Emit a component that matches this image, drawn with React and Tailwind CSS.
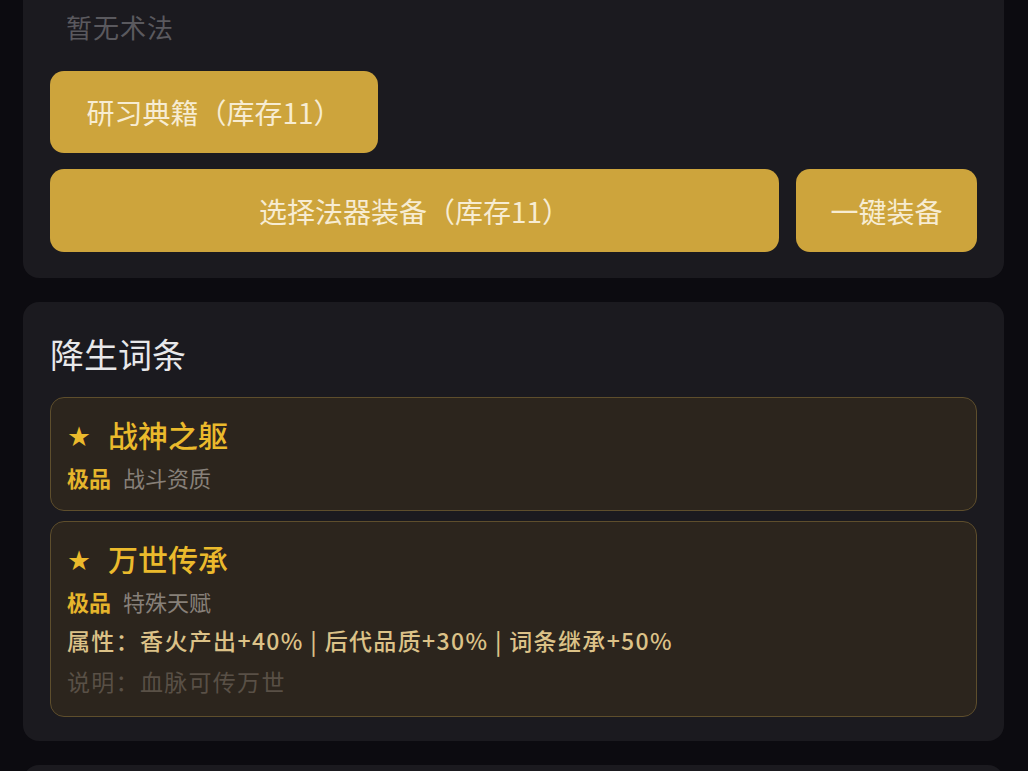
import React from "react";

const font = { fontFamily: '"Noto Sans CJK SC", "Noto Sans", sans-serif' };

function Trait({ title, grade, kind, attr, desc }) {
  return (
    <div className="rounded-[14px] border border-[#5e4e2c] bg-[#2c251d] pl-[16px] pr-4 pt-[18px] pb-[19px]">
      <div className="flex items-center h-[36px] text-[#ebba2c]">
        <span className="text-[22px] leading-none w-[24px] ml-[1px]">★</span>
        <span className="ml-[16px] text-[30px] font-medium leading-[36px]">{title}</span>
      </div>
      <div className="mt-[11px] flex items-center h-[28px] text-[22px]">
        <span className="font-bold text-[#e6b52c]">{grade}</span>
        <span className="ml-[12px] text-[#878079]">{kind}</span>
      </div>
      {attr && (
        <div className="mt-[10px] h-[30px] leading-[30px] text-[23px] tracking-[1.35px] text-[#dcc288] font-medium whitespace-nowrap">
          {attr}
        </div>
      )}
      {desc && (
        <div className="mt-[11px] mb-[1px] h-[30px] leading-[30px] text-[23px] tracking-[1.3px] text-[#595046]">
          {desc}
        </div>
      )}
    </div>
  );
}

export default function App() {
  return (
    <div
      className="w-[1028px] h-[771px] overflow-hidden bg-[#0c0b10] pl-[23px] pr-[24px]"
      style={font}
    >
      <div className="-mt-[40px] rounded-[16px] bg-[#1b1a1f] px-[27px] pt-[51px] pb-[26px]">
        <div className="pl-[16px] h-[32px] leading-[32px] text-[26px] tracking-[1px] text-[#5a595e]">
          暂无术法
        </div>
        <div className="mt-[28px] flex">
          <button className="h-[82px] w-[328px] rounded-[14px] bg-[#cda43c] text-[28px] text-[#f7ecd2]">
            研习典籍（库存11）
          </button>
        </div>
        <div className="mt-[16px] flex gap-[17px]">
          <button className="h-[83px] flex-1 rounded-[14px] bg-[#cda43c] text-[28px] text-[#f7ecd2]">
            选择法器装备（库存11）
          </button>
          <button className="h-[83px] w-[181px] rounded-[14px] bg-[#cda43c] text-[28px] text-[#f7ecd2]">
            一键装备
          </button>
        </div>
      </div>

      <div className="mt-[24px] rounded-[16px] bg-[#1b1a1f] px-[27px] pt-[29px] pb-[24px]">
        <div className="h-[46px] leading-[46px] text-[34px] text-[#e8e8ea]">降生词条</div>
        <div className="mt-[20px] flex flex-col gap-[10px]">
          <Trait title="战神之躯" grade="极品" kind="战斗资质" />
          <Trait
            title="万世传承"
            grade="极品"
            kind="特殊天赋"
            attr="属性：香火产出+40% | 后代品质+30% | 词条继承+50%"
            desc="说明：血脉可传万世"
          />
        </div>
      </div>

      <div className="mt-[24px] h-[80px] rounded-[16px] bg-[#1b1a1f]" />
    </div>
  );
}
